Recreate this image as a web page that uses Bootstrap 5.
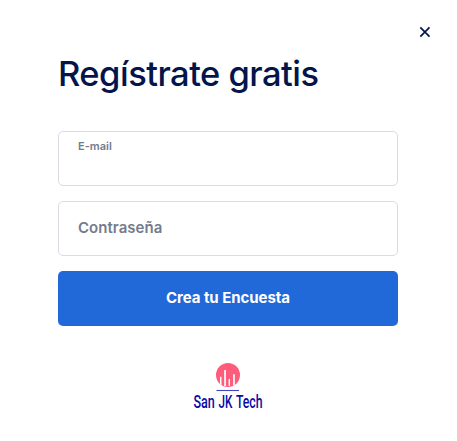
<!DOCTYPE html>
<html lang="es">
<head>
<meta charset="utf-8">
<meta name="viewport" content="width=device-width, initial-scale=1">
<title>Regístrate gratis</title>
<link href="https://cdn.jsdelivr.net/npm/bootstrap@5.3.0/dist/css/bootstrap.min.css" rel="stylesheet">
<style>
body{font-family:Inter,"Liberation Sans",sans-serif;color:#03154b;background:#fff;overflow:hidden}
.signup{width:457px;height:441px;padding:20px 59px 0 58px}
.close-row{height:24px;margin-right:-39px}
.close-x{width:24px;height:24px;color:#03154b}
.signup-title{font-size:34.5px;font-weight:500;line-height:44px;margin:8px 0 35px;white-space:nowrap;letter-spacing:-.52px}
.field{height:55px;border:1px solid #d9dbe5;border-radius:5px;margin-bottom:15px;padding:0 19px;color:#757b8c;font-weight:600;cursor:text}
.field-small{font-size:11px;line-height:14px;padding-top:7px}
.field-large{font-size:15px;line-height:20px;padding-bottom:2px;letter-spacing:.04px}
.cta{height:55px;background:#2169d9;border:0;border-radius:5px;font-size:15px;font-weight:700;line-height:20px;padding:0 0 2px;letter-spacing:-.05px}
.cta:hover{background:#1c5fc8}
.brand-logo{margin-top:34px}
.brand-logo svg{overflow:visible}
</style>
<script src="https://cdn.jsdelivr.net/npm/bootstrap@5.3.0/dist/js/bootstrap.bundle.min.js"></script>
</head>
<body>
<main class="signup d-flex flex-column">
  <div class="close-row d-flex justify-content-end">
    <button type="button" class="close-x btn p-0 border-0 d-flex" aria-label="Cerrar">
      <svg width="24" height="24" viewBox="0 0 24 24" fill="none" stroke="currentColor" stroke-width="1.7"><path d="M7.3 7.4l9.2 9.2M16.5 7.4l-9.2 9.2"/></svg>
    </button>
  </div>
  <h1 class="signup-title">Regístrate gratis</h1>
  <label class="field d-flex align-items-start"><span class="field-small">E-mail</span></label>
  <label class="field d-flex align-items-center"><span class="field-large">Contraseña</span></label>
  <button type="button" class="cta btn btn-primary w-100">Crea tu Encuesta</button>
  <div class="brand-logo d-flex justify-content-center">
    <svg width="80" height="54" viewBox="188 360 80 54" role="img" aria-label="San JK Tech">
      <defs><clipPath id="disc"><circle cx="228" cy="375" r="12"/></clipPath></defs>
      <circle cx="228" cy="375" r="12" fill="#ff5b7b"/>
      <g clip-path="url(#disc)" fill="#fff">
        <path d="M220 376.8h1.5v9.2h-1.5zM224.2 370h1.7v16h-1.7zM228.6 379h1.4v7h-1.4zM233.1 374.2h1.7v11.8h-1.7z"/>
      </g>
      <path d="M216.5 390.5h22.5" stroke="#3f43c4" stroke-width="1.1"/>
      <g font-family="Roboto, sans-serif" font-weight="500" font-size="17.6" fill="#0b0ba5">
        <text transform="translate(193.4 408.2) scale(.66 1)" textLength="32.4" lengthAdjust="spacingAndGlyphs">San</text>
        <text transform="translate(218.5 408.2) scale(.66 1)" textLength="21" lengthAdjust="spacingAndGlyphs">JK</text>
        <text transform="translate(235.9 408.2) scale(.66 1)" textLength="40.4" lengthAdjust="spacingAndGlyphs">Tech</text>
      </g>
    </svg>
  </div>
</main>
</body>
</html>
